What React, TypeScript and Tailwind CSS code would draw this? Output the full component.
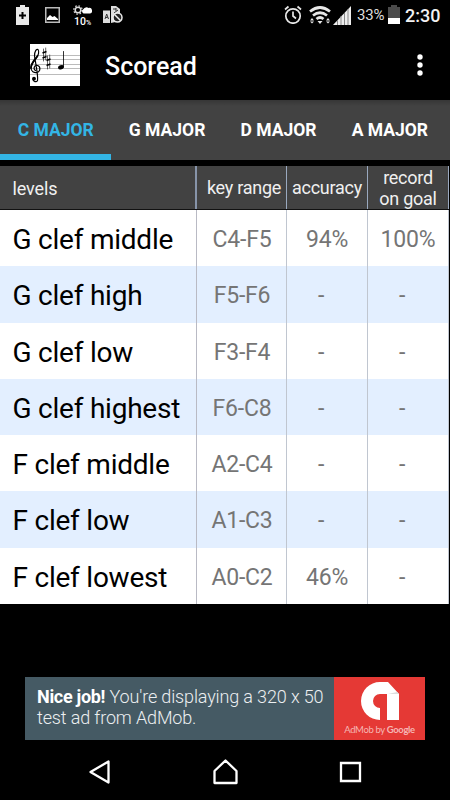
import { ReactNode } from 'react';

const tabs = ['C MAJOR', 'G MAJOR', 'D MAJOR', 'A MAJOR'];

interface Level {
  name: string;
  range: string;
  accuracy: string;
  record: string;
}

const levels: Level[] = [
  { name: 'G clef middle', range: 'C4-F5', accuracy: '94%', record: '100%' },
  { name: 'G clef high', range: 'F5-F6', accuracy: '-', record: '-' },
  { name: 'G clef low', range: 'F3-F4', accuracy: '-', record: '-' },
  { name: 'G clef highest', range: 'F6-C8', accuracy: '-', record: '-' },
  { name: 'F clef middle', range: 'A2-C4', accuracy: '-', record: '-' },
  { name: 'F clef low', range: 'A1-C3', accuracy: '-', record: '-' },
  { name: 'F clef lowest', range: 'A0-C2', accuracy: '46%', record: '-' },
];

function StatusBar() {
  return (
    <div className="flex h-8 shrink-0 items-start text-[#e8e8e8]">
      {/* notifications */}
      <svg className="mt-[5px] ml-4 h-5 w-[13px] shrink-0" viewBox="0 0 13 20" fill="currentColor">
        <path d="M4 0h5v2h4v18H0V2h4z" />
        <path d="M6.5 7v7M3 10.500h7" stroke="#000" strokeWidth="2" />
      </svg>
      <svg className="mt-[7px] ml-4 h-4 w-[15px] shrink-0" viewBox="0 0 15 16">
        <rect x=".75" y=".75" width="13.500" height="14.500" fill="none" stroke="#bbb" strokeWidth="1.500" />
        <path d="M2 13v-2l3-3 2.500 2 2-1 3.500 3v1z" fill="#fff" />
      </svg>
      <div className="mt-[5px] ml-[13px] flex w-[19px] shrink-0 flex-col items-center">
        <svg className="h-[10px] w-[19px]" viewBox="0 0 19 10">
          <circle cx="5" cy="5" r="2.800" fill="none" stroke="#ddd" strokeWidth="1.500" />
          <circle cx="5" cy="5" r="4.200" fill="none" stroke="#ddd" strokeWidth="1.300" strokeDasharray="1.500 1.800" />
          <path d="M10.500 8.500a2.500 2.500 0 0 1 0-4.500 3.500 3.500 0 0 1 5-1 2.800 2.800 0 0 1 1.500 5.500z" fill="#fff" />
        </svg>
        <span className="mt-px flex items-baseline text-[10.500px] leading-[11px] font-medium text-white">
          10<span className="text-[7px]">%</span>
        </span>
      </div>
      <svg className="mt-[5px] ml-[11px] h-[19px] w-5 shrink-0" viewBox="0 0 20 19">
        <path d="M0 5.500h7V18H0zM8 1h5l4 3v12l-9 2z" fill="#ddd" />
        <path d="m2 14 1.700-5 1.800 5M2.700 12.500h2M10 4h3m0-1v3m-2 2 4-3" fill="none" stroke="#333" strokeWidth="1" />
        <circle cx="14.500" cy="12.500" r="4.500" fill="#222" stroke="#eee" strokeWidth="1.500" />
        <path d="m11.500 9.500 6 6" stroke="#eee" strokeWidth="1.500" />
      </svg>

      {/* system */}
      <svg className="mt-[5px] ml-[161px] h-[19px] w-[18px] shrink-0" viewBox="0 0 18 19" fill="none" stroke="currentColor" strokeWidth="1.700">
        <circle cx="9" cy="11" r="7.200" />
        <path d="M9 6.500V11l3 2.500M1 4.500 4.500 1.500M17 4.500l-3.500-3" />
      </svg>
      <svg className="mt-[6px] ml-[7px] h-[19px] w-[22px] shrink-0" viewBox="0 0 22 19" fill="none" stroke="currentColor" strokeWidth="2.700">
        <path d="M1 5.500q10-8 20 0M4 9.500q7-5.500 14 0M7.500 13q3.500-3 7 0" />
        <path d="m11 18-2.500-3h5zM1 14.500l2-2.500 2 2.500zM1 15.500h4l-2 2zM17 14.500l2-2.500 2 2.500zM17 15.500h4l-2 2z" fill="currentColor" stroke="none" />
      </svg>
      <svg className="mt-[6px] ml-[2px] h-[19px] w-[18px] shrink-0" viewBox="0 0 18 19">
        <path d="M18 0v19H0z" fill="#eee" />
        <path d="M4.500 14v5M8 10v9M11.500 7v12M15 3v16" stroke="#888" strokeWidth="1" />
      </svg>
      <span className="mt-[7px] ml-[6px] w-[28px] shrink-0 text-[15px] leading-[17px] tracking-[-0.200px] text-[#ddd]">33%</span>
      <svg className="mt-[5px] ml-[3px] h-[19px] w-3 shrink-0" viewBox="0 0 12 19">
        <path d="M3 0h6v2h3v17H0V2h3z" fill="#4b4b4b" />
        <path d="M0 13h12v6H0z" fill="#fff" />
      </svg>
      <span className="mt-[5px] ml-[5px] text-[18px] leading-[21px] font-medium text-[#f2f2f2]">2:30</span>
    </div>
  );
}

function ScoreLogo() {
  return (
    <svg className="h-[42px] w-[50px] bg-white" viewBox="0 0 50 42">
      <path d="M0 11.500h50M0 15.500h50M0 20.500h50M0 24.500h50M0 30.500h50" stroke="#aaa" strokeWidth=".8" />
      <g fill="none" stroke="#000" strokeLinecap="round">
        <path
          d="M7.500 36.500c-1 2-4.500 1.500-4.500-1.500M7.500 36.500C8.500 32 5 16 4.500 12 4.200 8 6.500 4.500 8 5.500c1.500 2 .5 6-2 9C3 18 1 20 1 24c0 3.500 3 5 6 4.500 3.500-.8 4-6 .5-7C4 21 3 25 5.500 26.500"
          strokeWidth="1.200"
        />
        <path d="M7.500 12C4 17 1 19 1 24" strokeWidth="1.800" />
        <path d="M13.500 5v12M15.700 4v12M17.500 12v13M19.700 11v13" strokeWidth=".6" />
        <path d="m12.500 9 4-1.500M12.500 14l4-1.500M16.500 16.500l4-1.500M16.500 21.500l4-1.500" strokeWidth="1.500" strokeLinecap="butt" />
        <path d="M33.500 23V7.500" strokeWidth=".8" />
      </g>
      <circle cx="4" cy="34.700" r="1.900" />
      <ellipse cx="31" cy="23.200" rx="3" ry="2.100" transform="rotate(-18 31 23.200)" />
    </svg>
  );
}

function AppBar() {
  return (
    <header className="flex h-[68px] shrink-0 items-center pr-[26px] pb-[2px] pl-[30px]">
      <ScoreLogo />
      <h1 className="ml-[25px] flex-1 pt-[4px] text-[25px] leading-[30px] font-medium text-white">Scoread</h1>
      <svg className="h-6 w-2" viewBox="0 0 8 24" fill="#fff">
        <circle cx="4" cy="4" r="2.700" />
        <circle cx="4" cy="12" r="2.700" />
        <circle cx="4" cy="20" r="2.700" />
      </svg>
    </header>
  );
}

function Tabs() {
  return (
    <nav className="flex h-[60px] shrink-0 bg-linear-to-b from-[#363636] to-[#424242] to-10%">
      {tabs.map((tab, i) => (
        <button
          key={tab}
          className={`h-full w-[111.400px] shrink-0 border-b-[6px] pt-[6px] text-[17.500px] font-bold whitespace-nowrap ${
            i === 0 ? 'border-[#33b5e5] text-[#33b5e5]' : 'border-transparent text-white'
          }`}
        >
          {tab}
        </button>
      ))}
    </nav>
  );
}

function HeaderCell({ children }: { children: ReactNode }) {
  return (
    <div className="flex items-center justify-center border-r border-[#9aa9bf] text-center text-[18px] leading-[21px] tracking-[-0.250px] whitespace-nowrap">
      {children}
    </div>
  );
}

function LevelsTable() {
  return (
    <section className="mt-[6px] mr-[1px] shrink-0">
      <div className="grid h-[44px] grid-cols-[197px_90px_81px_81px] border-b border-[#111] bg-[#424242] text-[#f0f0f0]">
        <div className="flex items-center border-r-2 border-[#8794a9] pt-px pl-[12.500px] text-[18px] tracking-[-0.100px]">levels</div>
        <HeaderCell>
          <span className="pl-[5px]">key range</span>
        </HeaderCell>
        <HeaderCell>accuracy</HeaderCell>
        <HeaderCell>
          record
          <br />
          on goal
        </HeaderCell>
      </div>
      {levels.map((level, i) => (
        <div
          key={level.name}
          className={`grid h-[56.250px] grid-cols-[197px_90px_81px_81px] grid-rows-[100%] overflow-hidden text-center text-[23px] leading-[60px] tracking-[-0.200px] text-[#757575] ${
            i % 2 ? 'bg-[#e3efff]' : 'bg-white'
          }`}
        >
          <div className="border-r border-[#b9bac4] pl-[12.500px] text-left text-[28px] tracking-[-0.230px] whitespace-nowrap text-black">
            {level.name}
          </div>
          <div className="border-r border-[#c0c6d0] pl-px">{level.range}</div>
          <div className={`border-r border-[#c0c6d0] ${level.accuracy === '-' ? 'pr-3' : ''}`}>{level.accuracy}</div>
          <div className={`border-r border-[#c0c6d0] ${level.record === '-' ? 'pr-3' : ''}`}>{level.record}</div>
        </div>
      ))}
    </section>
  );
}

function AdBanner() {
  return (
    <aside className="mx-[25px] mt-[73px] flex h-[63px] shrink-0 bg-[#455a64]">
      <p className="w-[309px] pt-[9px] pl-3 text-[18px] leading-[21px] font-light tracking-[-0.140px] whitespace-nowrap text-[#eceff1]">
        <b className="font-bold tracking-[-0.300px] text-white">Nice job!</b> You're displaying a 320 x 50
        <br />
        test ad from AdMob.
      </p>
      <div className="flex w-[91px] flex-col items-center bg-[#e53935] pt-[5px]">
        <svg className="h-[38px] w-[38px]" viewBox="0 0 38 38">
          <path d="M19 0h8l11 12v26H26V12h-7a7 7 0 0 0 0 14v12A19 19 0 0 1 19 0z" fill="#fff" />
          <path d="M27 12h11l-2-2z" fill="#ddd" />
        </svg>
        <span className="mt-[4px] font-[Lato] text-[9.500px] leading-[12px] tracking-[-0.350px] whitespace-nowrap text-[#f5b5b3]">
          AdMob by <b className="font-bold">Google</b>
        </span>
      </div>
    </aside>
  );
}

function NavBar() {
  return (
    <footer className="mt-[19px] flex h-[26px] items-center justify-between pr-[88px] pl-[88px]">
      <svg className="h-[26px] w-[23px]" viewBox="0 0 23 26" fill="none" stroke="#fff" strokeWidth="2.300" strokeLinejoin="round">
        <path d="M20.500 2.500v21L2.500 13z" />
      </svg>
      <svg className="h-[26px] w-[27px]" viewBox="0 0 27 26" fill="none" stroke="#fff" strokeWidth="2.300" strokeLinejoin="round">
        <path d="M2.500 12 13.500 1.500l11 10.500v12h-22z" />
      </svg>
      <svg className="h-[26px] w-[23px]" viewBox="0 0 23 26" fill="none" stroke="#fff" strokeWidth="2.300">
        <path d="M2 4h19v18H2z" />
      </svg>
    </footer>
  );
}

export default function App() {
  return (
    <div className="flex h-[800px] w-[450px] flex-col overflow-hidden bg-black font-[Roboto,sans-serif]">
      <StatusBar />
      <AppBar />
      <Tabs />
      <LevelsTable />
      <AdBanner />
      <NavBar />
    </div>
  );
}
